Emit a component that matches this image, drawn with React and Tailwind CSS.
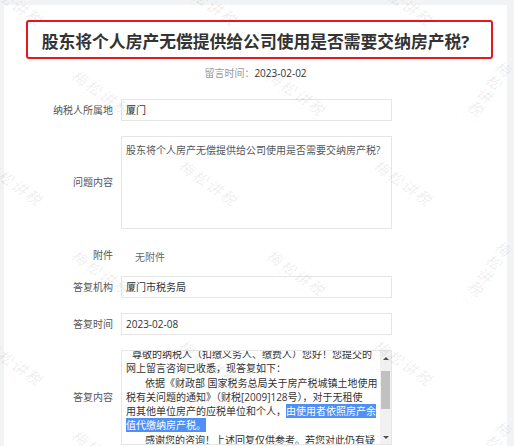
import React from "react";

/**
 * App.jsx - 网上留言咨询详情页（股东无偿提供房产）
 * 一个白色卡片，标题框 + 留言时间 + 只读表单，页面上铺一层"梅松讲税"水印。
 */

const font = "font-['Open_Sans','Noto_Sans_CJK_SC',sans-serif]";

// 水印网格：偶数行偏左，奇数行偏右，行距约 90px
const marks = [];
for (let r = 0; r < 6; r++) {
  for (let c = 0; c < 3; c++) {
    marks.push({ x: (r % 2 ? 100 : 12) + c * 195, y: 5 + r * 90 });
  }
}

const Watermark = ({ x, y }) => (
  <div
    className="absolute -translate-x-1/2 -translate-y-1/2 rotate-[35deg] flex flex-col items-center"
    style={{ left: x, top: y }}
  >
    <span className="text-[15px] leading-[16px] tracking-[2px] text-black/[0.08] italic">梅松讲税</span>
    <span className="text-[4px] leading-[5px] tracking-[0.5px] text-black/[0.08]">MEISONG JIANGSHUI</span>
  </div>
);

const Row = ({ label, children, className = "" }) => (
  <div className={`flex items-center ${className}`}>
    <div className="w-[109px] text-right text-[10px] text-[#555]">{label}</div>
    <div className="ml-[8px]">{children}</div>
  </div>
);

const Input = ({ children }) => (
  <div className="w-[271px] h-[22px] border border-[#e6e6e6] pl-[4px] flex items-center text-[10px] text-[#333]">
    {children}
  </div>
);

const App = () => {
  return (
    <div className={`relative min-h-screen h-[446px] overflow-hidden bg-[#f2f3f5] pt-[5px] ${font}`}>
      <div className="ml-[4px] mr-[7px] bg-white pt-[15px] h-[600px]">
        {/* 标题 */}
        <div className="ml-[22px] mr-[14px] h-[39px] border-2 border-[#e8161e] rounded-[3px] pt-[8px] pr-[8px] text-center">
          <span className="text-[16.8px] leading-[24px] font-bold text-[#333]">
            股东将个人房产无偿提供给公司使用是否需要交纳房产税?
          </span>
        </div>

        <div className="mt-[6px] h-[16px] flex justify-center items-center text-[10px]">
          <span className="text-[#999]">留言时间：</span>
          <span className="text-[#333]">2023-02-02</span>
        </div>

        <Row label="纳税人所属地" className="mt-[18px]">
          <Input>厦门</Input>
        </Row>

        <Row label="问题内容" className="mt-[15px]">
          <div className="w-[271px] h-[93px] border border-[#e6e6e6] pl-[4px] pt-[6px] text-[10px] leading-[14px] text-[#555]">
            股东将个人房产无偿提供给公司使用是否需要交纳房产税?
          </div>
        </Row>

        <Row label="附件" className="mt-[15px] h-[22px]">
          <span className="pl-[14px] text-[10px] text-[#666]">无附件</span>
        </Row>

        <Row label="答复机构" className="mt-[10px]">
          <Input>厦门市税务局</Input>
        </Row>

        <Row label="答复时间" className="mt-[15px]">
          <Input>2023-02-08</Input>
        </Row>

        <Row label="答复内容" className="mt-[15px]">
          <div className="w-[271px] h-[95px] border border-[#e6e6e6] flex">
            <div className="flex-1 overflow-hidden pl-[4px] text-[10px] leading-[14.3px] text-[#333] whitespace-nowrap">
              <div className="-mt-[4px]">
                <div className="pl-[6px]">尊敬的纳税人（扣缴义务人、缴费人）您好！您提交的</div>
                <div>网上留言咨询已收悉，现答复如下：</div>
                <div className="pl-[19px]">依据《财政部 国家税务总局关于房产税城镇土地使用</div>
                <div>税有关问题的通知》（财税[2009]128号），对于无租使</div>
                <div>
                  用其他单位房产的应税单位和个人，
                  <span className="bg-[#4f8ff7] text-white">由使用者依照房产余</span>
                </div>
                <div>
                  <span className="bg-[#4f8ff7] text-white">值代缴纳房产税。</span>
                </div>
                <div className="pl-[19px]">感谢您的咨询！上述回复仅供参考。若您对此仍有疑</div>
              </div>
            </div>
            {/* 滚动条 */}
            <div className="w-[11px] bg-[#f1f1f1] flex flex-col items-center">
              <div className="h-[14px] flex items-center justify-center">
                <div className="w-0 h-0 border-l-[3px] border-r-[3px] border-b-[3px] border-l-transparent border-r-transparent border-b-[#505050]" />
              </div>
              <div className="mt-[6px] w-[9px] h-[38px] bg-[#c1c1c1]" />
              <div className="flex-1" />
              <div className="h-[14px] flex items-center justify-center">
                <div className="w-0 h-0 border-l-[3px] border-r-[3px] border-t-[3px] border-l-transparent border-r-transparent border-t-[#505050]" />
              </div>
            </div>
          </div>
        </Row>
      </div>

      {/* 水印层 */}
      <div className="absolute inset-0 pointer-events-none">
        {marks.map((m, i) => (
          <Watermark key={i} x={m.x} y={m.y} />
        ))}
      </div>
    </div>
  );
};

export default App;
